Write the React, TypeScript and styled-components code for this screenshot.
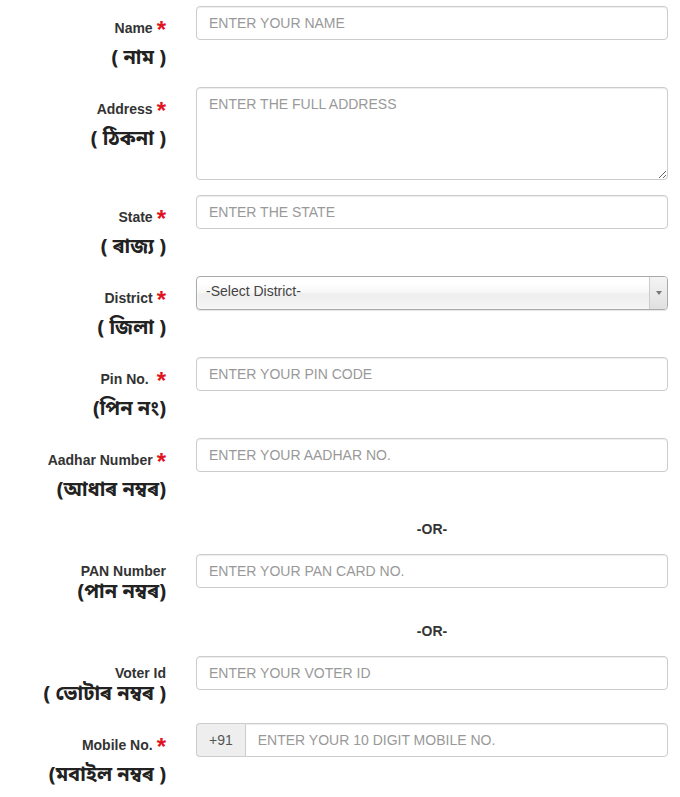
import React from 'react';
import styled, { createGlobalStyle } from 'styled-components';

const GlobalStyle = createGlobalStyle`
  * { box-sizing: border-box; }
  body {
    margin: 0;
    background: #fff;
    color: #333;
    font-family: "Liberation Sans", Arial, sans-serif;
    font-size: 14px;
    line-height: 20px;
  }
`;

const bengaliFont = `"Noto Sans Bengali", "Lohit Assamese", "Lohit Bengali", "Noto Serif Bengali", "Liberation Sans", sans-serif`;

const Form = styled.form`
  padding: 6px 12px 20px 0;
`;

const Group = styled.div`
  display: grid;
  grid-template-columns: 166px 1fr;
  column-gap: 30px;
  align-items: start;
  margin-bottom: 15px;
`;

const Label = styled.label<{ $required?: boolean }>`
  display: block;
  text-align: right;
  padding-top: ${p => (p.$required ? '12px' : '7px')};
  font-weight: bold;
  color: #333;
`;

const Star = styled.span`
  color: #e0141e;
  font-size: 24px;
  line-height: 0;
  vertical-align: -5px;
  margin-left: 4px;
`;

const Local = styled.span<{ $required?: boolean }>`
  display: block;
  margin-top: ${p => (p.$required ? '9px' : '0')};
  font-family: ${bengaliFont};
  font-size: 20px;
  line-height: 25px;
  font-weight: bold;
  color: #222;
`;

const Input = styled.input`
  display: block;
  width: 100%;
  height: 34px;
  padding: 6px 12px;
  font: inherit;
  color: #555;
  background: #fff;
  border: 1px solid #ccc;
  border-radius: 4px;
  box-shadow: inset 0 1px 1px rgba(0, 0, 0, 0.075);
  outline: none;

  &::placeholder {
    color: #999;
  }
`;

const TextArea = styled.textarea`
  display: block;
  width: 100%;
  height: 93px;
  padding: 6px 12px;
  font: inherit;
  color: #555;
  border: 1px solid #ccc;
  border-radius: 4px;
  box-shadow: inset 0 1px 1px rgba(0, 0, 0, 0.075);
  resize: vertical;
  outline: none;

  &::placeholder {
    color: #999;
  }
`;

const Select = styled.div`
  display: flex;
  align-items: stretch;
  height: 34px;
  border: 1px solid #aaa;
  border-radius: 4px;
  background: linear-gradient(#fff 20%, #f6f6f6 50%, #eee 52%, #f4f4f4 100%);
  box-shadow: 0 0 3px #fff inset, 0 1px 1px rgba(0, 0, 0, 0.1);
  color: #444;
  overflow: hidden;
`;

const SelectText = styled.span`
  flex: 1;
  padding: 4px 0 0 9px;
  line-height: 20px;
`;

const SelectArrow = styled.span`
  display: flex;
  align-items: center;
  justify-content: center;
  width: 18px;
  border-left: 1px solid #ccc;
  background: linear-gradient(#f4f4f4, #e0e0e0);

  &::after {
    content: '';
    border-left: 3px solid transparent;
    border-right: 3px solid transparent;
    border-top: 4px solid #777;
  }
`;

const InputGroup = styled.div`
  display: flex;

  ${Input} {
    flex: 1;
    border-top-left-radius: 0;
    border-bottom-left-radius: 0;
  }
`;

const Addon = styled.span`
  display: flex;
  align-items: center;
  padding: 6px 12px;
  height: 34px;
  color: #555;
  background: #eee;
  border: 1px solid #ccc;
  border-right: 0;
  border-radius: 4px 0 0 4px;
`;

const OrText = styled.div`
  grid-column: 2;
  text-align: center;
  font-weight: bold;
  color: #333;
`;

type FieldProps = {
  label: string;
  local: string;
  required?: boolean;
  children: React.ReactNode;
};

const Field = ({ label, local, required, children }: FieldProps) => (
  <Group>
    <Label $required={required}>
      <span>
        {label}
        {required && <Star>*</Star>}
      </span>
      <Local $required={required}>{local}</Local>
    </Label>
    <div>{children}</div>
  </Group>
);

const Or = () => (
  <Group>
    <OrText>-OR-</OrText>
  </Group>
);

export default function App() {
  return (
    <>
      <GlobalStyle />
      <Form>
        <Field label="Name" local="( নাম )" required>
          <Input placeholder="ENTER YOUR NAME" />
        </Field>
        <Field label="Address" local="( ঠিকনা )" required>
          <TextArea placeholder="ENTER THE FULL ADDRESS" />
        </Field>
        <Field label="State" local="( ৰাজ্য )" required>
          <Input placeholder="ENTER THE STATE" />
        </Field>
        <Field label="District" local="( জিলা )" required>
          <Select>
            <SelectText>-Select District-</SelectText>
            <SelectArrow />
          </Select>
        </Field>
        <Field label={'Pin No.\u00a0'} local="(পিন নং)" required>
          <Input placeholder="ENTER YOUR PIN CODE" />
        </Field>
        <Field label="Aadhar Number" local="(আধাৰ নম্বৰ)" required>
          <Input placeholder="ENTER YOUR AADHAR NO." />
        </Field>
        <Or />
        <Field label="PAN Number" local="(পান নম্বৰ)">
          <Input placeholder="ENTER YOUR PAN CARD NO." />
        </Field>
        <Or />
        <Field label="Voter Id" local="( ভোটাৰ নম্বৰ )">
          <Input placeholder="ENTER YOUR VOTER ID" />
        </Field>
        <Field label="Mobile No." local="(মবাইল নম্বৰ )" required>
          <InputGroup>
            <Addon>+91</Addon>
            <Input placeholder="ENTER YOUR 10 DIGIT MOBILE NO." />
          </InputGroup>
        </Field>
      </Form>
    </>
  );
}
